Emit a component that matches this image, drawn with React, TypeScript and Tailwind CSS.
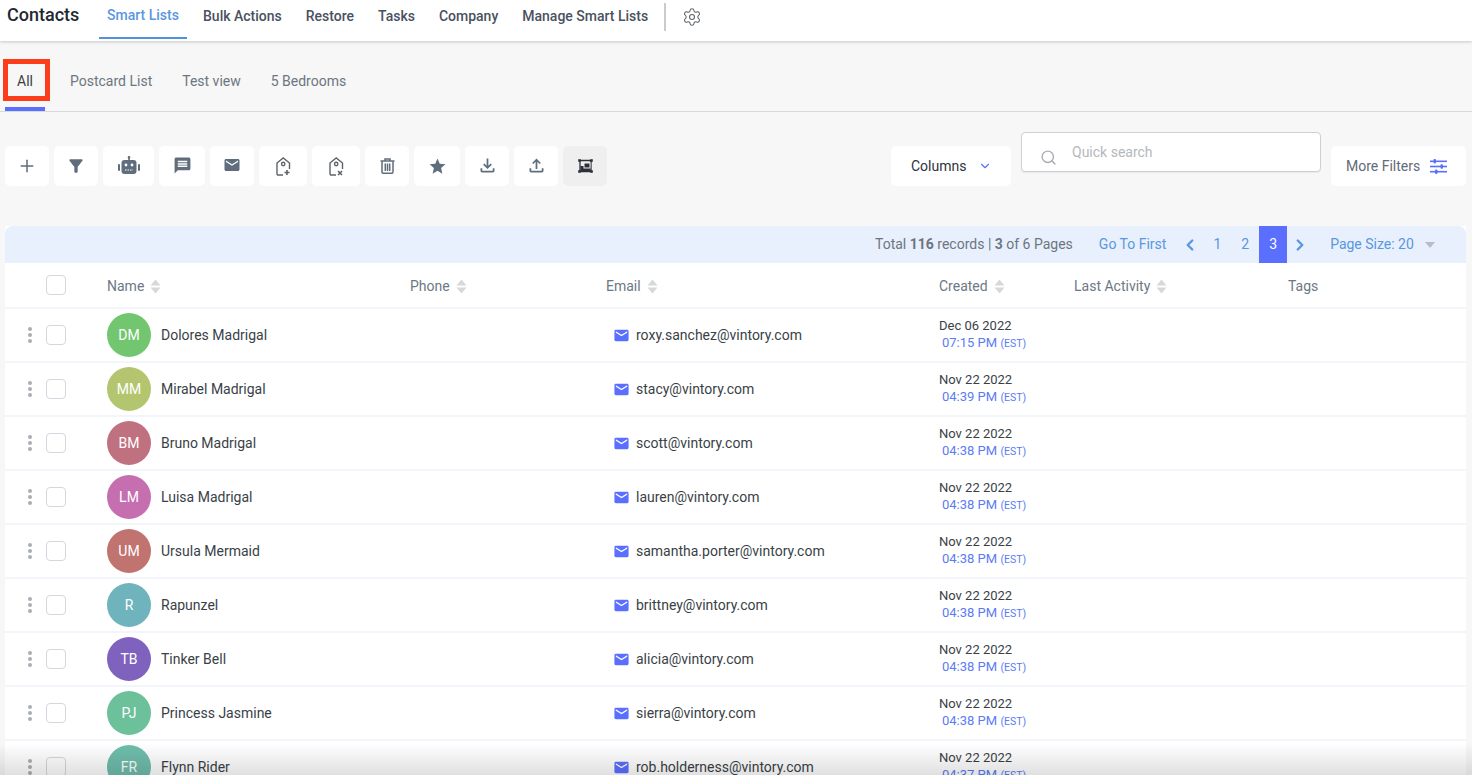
import React from "react";
import { Settings, Search, ChevronDown, ChevronLeft, ChevronRight, Plus } from "lucide-react";
import { MdMessage, MdEmail, MdStar, MdOutlineFileDownload, MdOutlineFileUpload, MdFilterAlt } from "react-icons/md";

const Sort = () => (
  <svg width="11" height="15" viewBox="0 0 11 15" className="ml-[6px] mt-[1px]">
    <path d="M5.5 0.5 L10.5 6.5 H0.5Z M0.5 8.5 H10.5 L5.5 14.5Z" fill="#d6d8da" />
  </svg>
);

const Robot = () => (
  <svg width="22" height="20" viewBox="0 0 22 20" fill="#5f6d7c">
    <rect x="3.5" y="4" width="15" height="14" rx="3" />
    <rect x="10.2" y="0.5" width="1.6" height="4" />
    <circle cx="11" cy="1.2" r="1.2" />
    <rect x="0" y="8" width="2" height="7" rx="1" />
    <rect x="20" y="8" width="2" height="7" rx="1" />
    <circle cx="8" cy="9" r="1.4" fill="#fff" />
    <circle cx="14" cy="9" r="1.4" fill="#fff" />
    <path d="M7 14h8" stroke="#fff" strokeWidth="1.2" strokeDasharray="1.5 1" />
  </svg>
);

const TagIcon = ({ kind }: { kind: "add" | "remove" }) => (
  <svg width="15" height="19" viewBox="0 0 15 19" fill="none" stroke="#5f6468" strokeWidth="1.4">
    <path d="M7 18H2.2A1.2 1.2 0 0 1 1 16.8V6L7.2 1l6.3 5v6" />
    <circle cx="7.2" cy="7" r="1.7" />
    {kind === "add" ? (
      <path d="M11 13v5M8.5 15.5h5" strokeWidth="1.6" />
    ) : (
      <path d="M9 14l4 4M13 14l-4 4" strokeWidth="1.6" />
    )}
  </svg>
);

const Trash = () => (
  <svg width="15" height="16" viewBox="0 0 15 16" fill="none" stroke="#5f6d7c" strokeWidth="1.5">
    <path d="M0.5 3h14M5 2.5V1h5v1.5" />
    <path d="M2 3.2V14a1.3 1.3 0 0 0 1.3 1.3h8.4A1.3 1.3 0 0 0 13 14V3.2" />
    <path d="M5.3 5.5v7.5M7.5 5.5v7.5M9.7 5.5v7.5" />
  </svg>
);

const Resize = () => (
  <svg width="15" height="14" viewBox="0 0 15 14" fill="none">
    <path d="M2 1.5h11M2 12.5h11M2 1.5v11M13 1.5v11" stroke="#2c3138" strokeWidth="1.3" />
    <path d="M0.5 0.5h2v2h-2zM12.5 0.5h2v2h-2zM0.5 11.5h2v2h-2zM12.5 11.5h2v2h-2z" fill="#2c3138" stroke="#2c3138" strokeWidth="0.6" />
    <rect x="2.5" y="7" width="10" height="5" fill="#2c3138" />
    <rect x="6" y="4" width="6" height="5" fill="#2c3138" stroke="#efefef" strokeWidth="1" />
  </svg>
);

const Sliders = () => (
  <svg width="17" height="15" viewBox="0 0 17 15" fill="#5b6fff" className="ml-[10px]">
    <rect x="0" y="1.5" width="17" height="1.6" />
    <rect x="0" y="6.7" width="17" height="1.6" />
    <rect x="0" y="11.9" width="17" height="1.6" />
    <rect x="3.5" y="0" width="2.5" height="4.5" rx="1" />
    <rect x="10.5" y="5.2" width="2.5" height="4.5" rx="1" />
    <rect x="5" y="10.5" width="2.5" height="4.5" rx="1" />
  </svg>
);

const tools: { w: string; icon: React.ReactNode; active?: boolean }[] = [
  { w: "w-[44px]", icon: <Plus size={20} color="#5f6d7c" strokeWidth={1.8} /> },
  { w: "w-[44px]", icon: <MdFilterAlt size={20} color="#5f6d7c" /> },
  { w: "w-[51px]", icon: <Robot /> },
  { w: "w-[46px]", icon: <MdMessage size={19} color="#5f6d7c" className="-mt-[2px]" /> },
  { w: "w-[44px]", icon: <MdEmail size={18} color="#5f6d7c" className="-mt-[2px]" /> },
  { w: "w-[48px]", icon: <TagIcon kind="add" /> },
  { w: "w-[48px]", icon: <TagIcon kind="remove" /> },
  { w: "w-[44px]", icon: <Trash /> },
  { w: "w-[46px]", icon: <MdStar size={19} color="#5f6d7c" /> },
  { w: "w-[44px]", icon: <MdOutlineFileDownload size={21} color="#5f6d7c" className="-mt-[1px]" /> },
  { w: "w-[44px]", icon: <MdOutlineFileUpload size={21} color="#5f6d7c" className="-mt-[1px]" /> },
  { w: "w-[44px]", icon: <Resize />, active: true },
];

const rows = [
  ["DM", "Dolores Madrigal", "roxy.sanchez@vintory.com", "Dec 06 2022", "07:15 PM", "bg-[#72c66f]"],
  ["MM", "Mirabel Madrigal", "stacy@vintory.com", "Nov 22 2022", "04:39 PM", "bg-[#b3c66f]"],
  ["BM", "Bruno Madrigal", "scott@vintory.com", "Nov 22 2022", "04:38 PM", "bg-[#c0717f]"],
  ["LM", "Luisa Madrigal", "lauren@vintory.com", "Nov 22 2022", "04:38 PM", "bg-[#c66fb0]"],
  ["UM", "Ursula Mermaid", "samantha.porter@vintory.com", "Nov 22 2022", "04:38 PM", "bg-[#c0736f]"],
  ["R", "Rapunzel", "brittney@vintory.com", "Nov 22 2022", "04:38 PM", "bg-[#6fb3bd]"],
  ["TB", "Tinker Bell", "alicia@vintory.com", "Nov 22 2022", "04:38 PM", "bg-[#7f62bd]"],
  ["PJ", "Princess Jasmine", "sierra@vintory.com", "Nov 22 2022", "04:38 PM", "bg-[#6cc09a]"],
  ["FR", "Flynn Rider", "rob.holderness@vintory.com", "Nov 22 2022", "04:37 PM", "bg-[#6fbdab]"],
];

const Check = () => <div className="w-[20px] h-[20px] rounded-[4px] border border-[#d4d6e0] bg-white" />;

const nav = ["Bulk Actions", "Restore", "Tasks", "Company", "Manage Smart Lists"];

export default function App() {
  return (
    <div className="relative h-[775px] overflow-hidden bg-[#f7f7f7] font-['Roboto',sans-serif] text-[14px]">
      {/* top bar */}
      <div className="h-[41px] bg-white shadow-[0_1px_3px_rgba(0,0,0,0.2)] flex items-start relative">
        <div className="ml-[7px] w-[92px] text-[18px] leading-[30px] text-[#23282f] font-medium">Contacts</div>
        <div className="w-[88px] h-[39px] border-b-2 border-[#4f92de] text-center text-[14px] font-medium leading-[31px] text-[#5a97de]">Smart Lists</div>
        <div className="ml-[16px] flex gap-[24px] text-[14px] font-medium leading-[33px] text-[#4a5160]">
          {nav.map((n) => (
            <span key={n}>{n}</span>
          ))}
        </div>
        <div className="ml-[16px] mt-[3px] w-[1.5px] h-[28px] bg-[#c9cccf]" />
        <Settings size={20} strokeWidth={1.3} color="#5f6468" className="ml-[16px] mt-[7px]" />
      </div>

      {/* views */}
      <div className="mt-[20px] h-[51px] border-b border-[#d9dade] flex items-start text-[14px] leading-[40px] text-[#6c7680]">
        <div className="ml-[5px] w-[40px] h-[50px] border-b-[4px] border-[#5b6fff] text-center text-[#3a3f47]">All</div>
        <span className="ml-[25px]">Postcard List</span>
        <span className="ml-[30px]">Test view</span>
        <span className="ml-[30px]">5 Bedrooms</span>
      </div>

      {/* toolbar */}
      <div className="mt-[20px] h-[54px] pl-[5px] flex items-end">
        <div className="flex gap-[5px]">
          {tools.map((t, i) => (
            <div key={i} className={`${t.w} h-[40px] rounded-[5px] flex items-center justify-center ${t.active ? "bg-[#efefef]" : "bg-white"}`}>
              {t.icon}
            </div>
          ))}
        </div>
        <div className="ml-[284px] w-[120px] h-[40px] rounded-[5px] bg-white flex items-center pl-[20px] text-[#2d3340]">
          <span>Columns</span>
          <ChevronDown size={14} color="#5b6fff" strokeWidth={2} className="ml-[12px]" />
        </div>
        <div className="ml-[10px] self-start w-[300px] h-[40px] rounded-[4px] border border-[#cfd0d4] bg-white flex items-start shadow-[0_1px_1px_rgba(0,0,0,0.06)]">
          <Search size={17} strokeWidth={2} color="#a9adb3" className="ml-[18px] mt-[16px]" />
          <span className="ml-[15px] mt-[10px] leading-[18px] text-[14px] text-[#b4b8bd]">Quick search</span>
        </div>
        <div className="ml-[10px] w-[135px] h-[40px] rounded-[5px] bg-white flex items-center pl-[15px] text-[#5f6b78]">
          <span>More Filters</span>
          <Sliders />
        </div>
      </div>

      {/* table */}
      <div className="mt-[40px] mx-[5px] w-[1461px] bg-white">
        <div className="h-[37px] rounded-t-[8px] bg-[#e8f0fd] flex items-center text-[14px] text-[#5a97de]">
          <div className="ml-[870px] text-[#6c7680] whitespace-nowrap">
            Total <b className="font-bold">116</b> records | <b className="font-bold">3</b> of 6 Pages
          </div>
          <span className="ml-[26px]">Go To First</span>
          <ChevronLeft size={18} strokeWidth={3.2} className="ml-[15px]" />
          <span className="ml-[14px]">1</span>
          <span className="ml-[20px]">2</span>
          <div className="ml-[10px] w-[28px] h-[37px] bg-[#5b6fff] text-white flex items-center justify-center">3</div>
          <ChevronRight size={18} strokeWidth={3.2} className="ml-[4px]" />
          <span className="ml-[21px]">Page Size: 20</span>
          <svg width="10" height="6" viewBox="0 0 10 6" className="ml-[11px]"><path d="M0 0h10L5 6z" fill="#b8bcc4" /></svg>
        </div>

        <div className="h-[44px] pt-[2px] flex items-center text-[#6c7885]">
          <div className="w-[41px]" />
          <div className="w-[61px] -mt-[2px]"><Check /></div>
          <div className="w-[303px] flex items-center">Name<Sort /></div>
          <div className="w-[196px] flex items-center">Phone<Sort /></div>
          <div className="w-[333px] flex items-center">Email<Sort /></div>
          <div className="w-[135px] flex items-center">Created<Sort /></div>
          <div className="w-[214px] flex items-center">Last Activity<Sort /></div>
          <div>Tags</div>
        </div>

        {rows.map((r) => (
          <div key={r[0]} className="h-[54px] border-t-2 border-[#f2f6fb] flex items-center text-[#3a3f47] box-border">
            <div className="w-[41px] flex flex-col items-center gap-[2px] pl-[9px]">
              <i className="w-[4px] h-[4px] rounded-full bg-[#a9aeb4]" />
              <i className="w-[4px] h-[4px] rounded-full bg-[#a9aeb4]" />
              <i className="w-[4px] h-[4px] rounded-full bg-[#a9aeb4]" />
            </div>
            <div className="w-[61px]"><Check /></div>
            <div className="w-[499px] flex items-center">
              <div className={`w-[44px] h-[44px] rounded-full ${r[5]} text-white flex items-center justify-center`}>{r[0]}</div>
              <span className="ml-[10px]">{r[1]}</span>
            </div>
            <div className="w-[333px] flex items-center pl-[8px]">
              <MdEmail size={17} color="#5b6fff" className="mr-[6px] -ml-[1px]" />
              <span>{r[2]}</span>
            </div>
            <div className="flex flex-col -mt-[2px] text-[13px] leading-[17px]">
              <span>{r[3]}</span>
              <span className="pl-[3px] text-[#5b7bf5]">{r[4]} <span className="text-[10.5px]">(EST)</span></span>
            </div>
          </div>
        ))}
      </div>

      {/* selection marker over the All tab */}
      <div className="absolute left-[3px] top-[59px] w-[47px] h-[42px] border-[5px] border-[#fb3d1c]" />
      {/* bottom fade */}
      <div className="absolute left-0 right-0 bottom-0 h-[32px] bg-gradient-to-b from-transparent to-[#0000001f] pointer-events-none" />
    </div>
  );
}
